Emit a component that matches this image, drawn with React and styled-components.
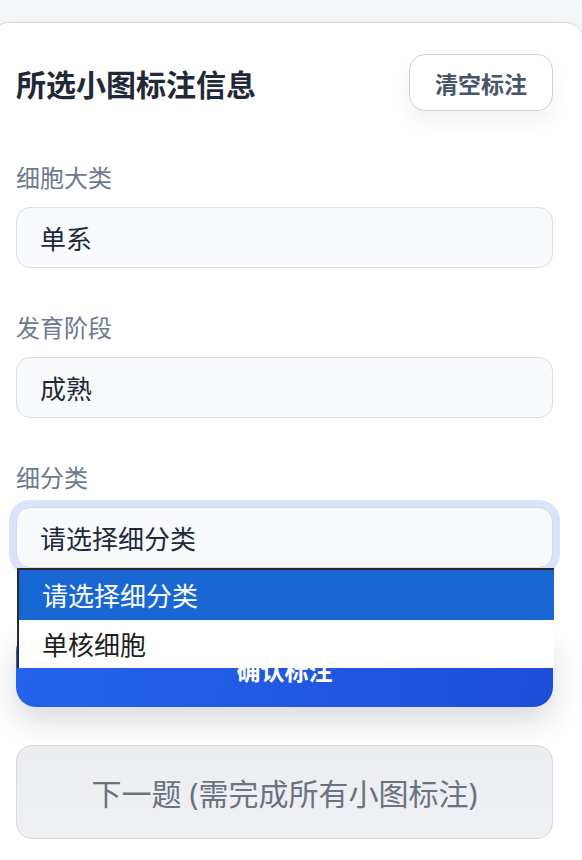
import React from "react";
import styled, { createGlobalStyle } from "styled-components";

const Global = createGlobalStyle`
  html, body { margin: 0; padding: 0; background: #f7f8fa; overflow: hidden; }
  body { font-family: "Noto Sans", "Noto Sans CJK SC", sans-serif; }
  * { box-sizing: border-box; }
`;

const Page = styled.div`
  padding-top: 22px;
  height: 860px;
  overflow: hidden;
`;

const Card = styled.section`
  margin-left: -11px;
  margin-right: -3px;
  background: #ffffff;
  border: 1px solid #d3dae5;
  border-radius: 20px;
  padding: 31px 31px 40px 26px;
  box-shadow: 0 0 28px rgba(15, 23, 42, 0.05);
  min-height: 900px;
`;

const Header = styled.div`
  display: flex;
  align-items: center;
  justify-content: space-between;
  height: 57px;
`;

const Title = styled.h2`
  margin: 0;
  font-size: 30px;
  font-weight: 700;
  color: #1f2937;
  letter-spacing: 0;
`;

const GhostButton = styled.button`
  height: 57px;
  width: 144px;
  border: 1px solid #cbd3df;
  border-radius: 16px;
  background: #fff;
  font-family: inherit;
  font-size: 23px;
  font-weight: 700;
  color: #475569;
  box-shadow: 0 10px 22px rgba(15, 23, 42, 0.06);
  padding: 0;
`;

const Field = styled.div`
  margin-top: ${(p) => p.$gap}px;
`;

const Label = styled.div`
  font-size: 24px;
  line-height: 36px;
  color: #6b7a90;
  margin-bottom: 11px;
`;

const SelectWrap = styled.div`
  position: relative;
`;

const SelectBox = styled.div`
  height: 61px;
  border: 1px solid ${(p) => (p.$focused ? "#cfdaf3" : "#d8dfea")};
  border-radius: 14px;
  background: #f8fafc;
  display: flex;
  align-items: center;
  padding-left: 23px;
  font-size: 26px;
  color: #1e293b;
  box-shadow: ${(p) => (p.$focused ? "0 0 0 7px #d9e3f9" : "none")};
`;

const Options = styled.ul`
  position: absolute;
  top: 100%;
  left: 1px;
  right: -1px;
  margin: 0;
  padding: 0;
  list-style: none;
  background: #fff;
  border-top: 2px solid #2a2a2a;
  border-left: 2px solid #2a2a2a;
  z-index: 5;
`;

const Option = styled.li`
  height: ${(p) => p.$h}px;
  display: flex;
  align-items: center;
  padding-left: 23px;
  font-size: 26px;
  background: ${(p) => (p.$active ? "#1967d2" : "#ffffff")};
  color: ${(p) => (p.$active ? "#ffffff" : "#1f1f1f")};
`;

const PrimaryButton = styled.button`
  display: block;
  width: 100%;
  height: 76px;
  margin-top: 63px;
  border: none;
  border-radius: 20px;
  background: linear-gradient(100deg, #2563eb 0%, #1d4ed8 100%);
  color: #fff;
  font-family: inherit;
  font-size: 24px;
  font-weight: 700;
  box-shadow: 0 14px 30px rgba(15, 23, 42, 0.16);
`;

const NextButton = styled.button`
  display: block;
  width: 100%;
  height: 94px;
  margin-top: 38px;
  border: 1px solid #d6d8dd;
  border-radius: 16px;
  background: linear-gradient(180deg, #ebedf0 0%, #f0f1f4 100%);
  color: #6b7280;
  font-family: inherit;
  font-size: 30px;
  font-weight: 400;
`;

export default function App() {
  return (
    <>
      <Global />
      <Page>
        <Card>
          <Header>
            <Title>所选小图标注信息</Title>
            <GhostButton>清空标注</GhostButton>
          </Header>

          <Field $gap={49}>
            <Label>细胞大类</Label>
            <SelectBox>单系</SelectBox>
          </Field>

          <Field $gap={42}>
            <Label>发育阶段</Label>
            <SelectBox>成熟</SelectBox>
          </Field>

          <Field $gap={42}>
            <Label>细分类</Label>
            <SelectWrap>
              <SelectBox $focused>请选择细分类</SelectBox>
              <Options>
                <Option $active $h={50}>请选择细分类</Option>
                <Option $h={48}>单核细胞</Option>
              </Options>
            </SelectWrap>
          </Field>

          <PrimaryButton>确认标注</PrimaryButton>
          <NextButton>下一题 (需完成所有小图标注)</NextButton>
        </Card>
      </Page>
    </>
  );
}
